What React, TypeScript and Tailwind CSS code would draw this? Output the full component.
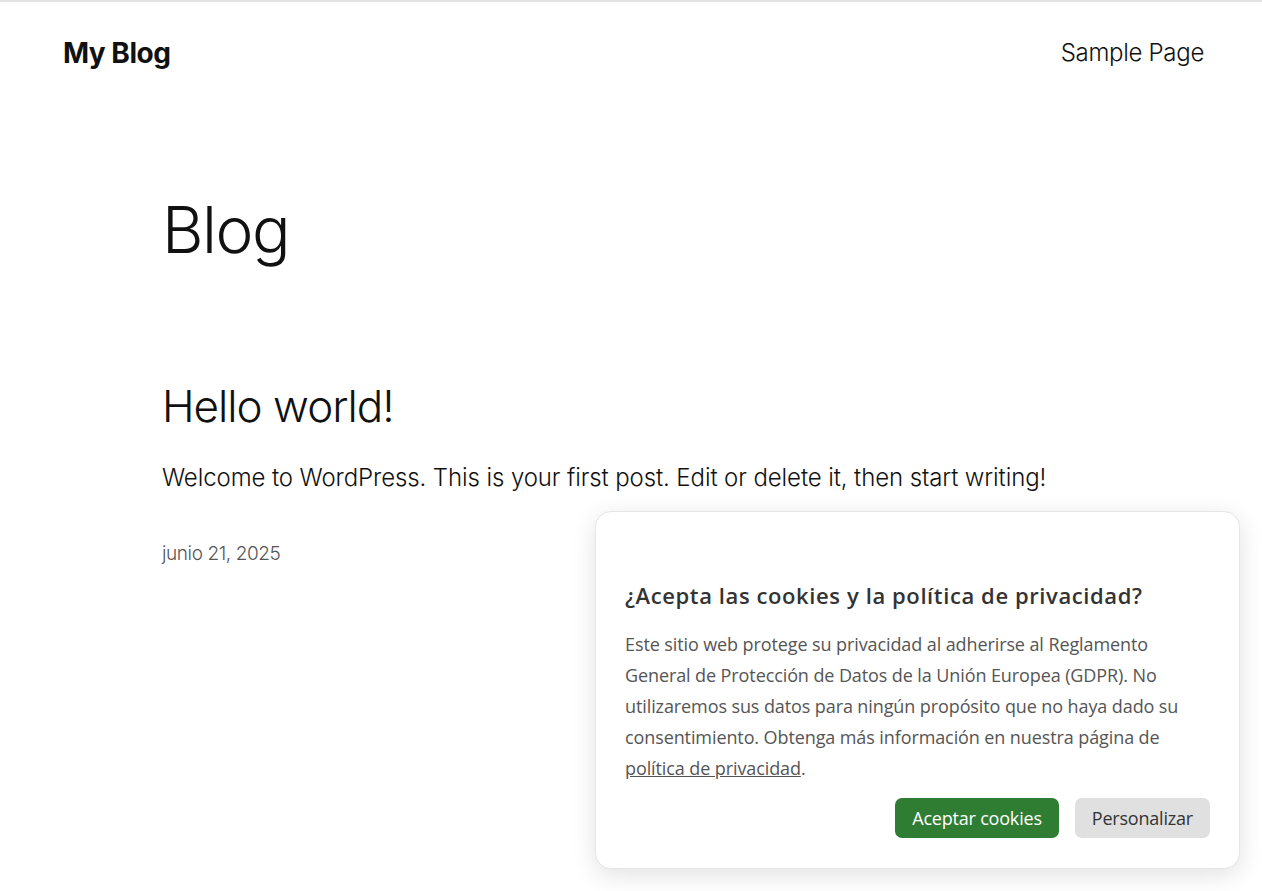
import React from "react";

export default function App() {
  return (
    <div className="relative min-h-[891px] w-full overflow-hidden bg-white border-t-2 border-[#e2e2e2] font-['Inter',sans-serif] text-[#111]">
      <header className="flex items-center justify-between pl-[63px] pr-[58px] pt-[32px] h-[100px] pb-[30px]">
        <div className="text-[28px] font-bold tracking-[-0.5px]">My Blog</div>
        <nav className="text-[24px] font-light tracking-[-0.3px]">Sample Page</nav>
      </header>
      <main className="pl-[162px] pt-[96px]">
        <h1 className="text-[64px] font-light leading-none tracking-[-1.5px]">Blog</h1>
        <article className="mt-[122px]">
          <h2 className="text-[44px] font-light leading-none tracking-[-1px]">Hello world!</h2>
          <p className="mt-[38px] text-[24px] font-light leading-none tracking-[-0.1px]">
            Welcome to WordPress. This is your first post. Edit or delete it, then start writing!
          </p>
          <div className="mt-[50px] text-[19px] font-light text-[#555] tracking-[-0.4px]">junio 21, 2025</div>
        </article>
      </main>

      <div className="absolute left-[595px] top-[509px] w-[645px] h-[358px] rounded-[16px] border border-[#e6e6e6] bg-white shadow-[0_6px_24px_rgba(0,0,0,0.12)] px-[29px] pt-[68px] font-['Open_Sans',sans-serif]">
        <h3 className="text-[22px] font-semibold text-[#333] tracking-[0.6px] leading-[30px]">¿Acepta las cookies y la política de privacidad?</h3>
        <p className="mt-[19px] text-[18px] leading-[31px] text-[#555] tracking-[-0.1px] whitespace-nowrap">
          Este sitio web protege su privacidad al adherirse al Reglamento
          <br />
          General de Protección de Datos de la Unión Europea (GDPR). No
          <br />
          utilizaremos sus datos para ningún propósito que no haya dado su
          <br />
          consentimiento. Obtenga más información en nuestra página de
          <br />
          <a className="underline">política de privacidad</a>.
        </p>
        <div className="mt-[14px] flex justify-end gap-[16px]">
          <button className="h-[40px] px-[17px] rounded-[7px] bg-[#2e7d32] text-white text-[18px] tracking-[-0.2px]">Aceptar cookies</button>
          <button className="h-[40px] px-[17px] rounded-[7px] bg-[#e0e0e0] text-[#333] text-[18px] tracking-[-0.2px]">Personalizar</button>
        </div>
      </div>
    </div>
  );
}
